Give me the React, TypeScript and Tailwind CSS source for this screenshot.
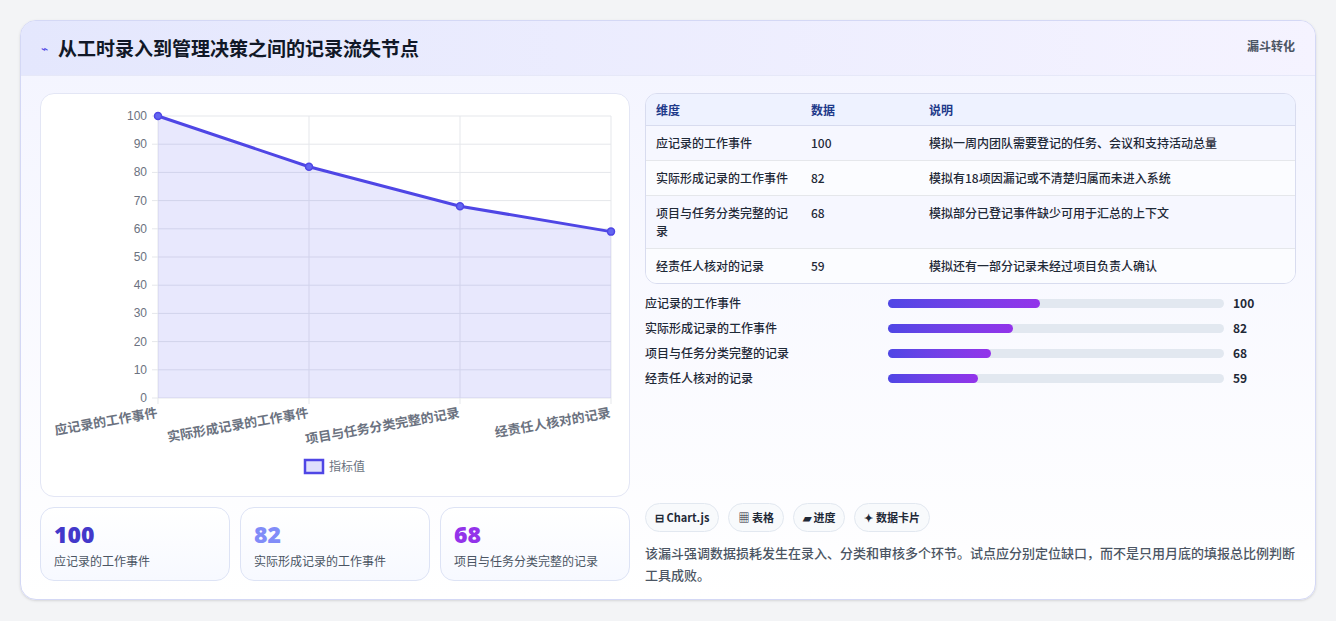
import React from "react";

const rows = [
  { k: "应记录的工作事件", v: 100, d: "模拟一周内团队需要登记的任务、会议和支持活动总量" },
  { k: "实际形成记录的工作事件", v: 82, d: "模拟有18项因漏记或不清楚归属而未进入系统" },
  { k: "项目与任务分类完整的记录", v: 68, d: "模拟部分已登记事件缺少可用于汇总的上下文" },
  { k: "经责任人核对的记录", v: 59, d: "模拟还有一部分记录未经过项目负责人确认" },
];

function Chart() {
  const x0 = 117, x1 = 570, y0 = 304, y1 = 22;
  const xs = [0, 1, 2, 3].map((i) => x0 + ((x1 - x0) / 3) * i);
  const ys = rows.map((r) => y0 - ((y0 - y1) * r.v) / 100);
  const line = xs.map((x, i) => `${i ? "L" : "M"}${x},${ys[i]}`).join(" ");
  const area = `${line} L${x1},${y0} L${x0},${y0} Z`;
  const ticks = [0, 10, 20, 30, 40, 50, 60, 70, 80, 90, 100];
  return (
    <svg width="588" height="400" className="block" style={{ fontFamily: "'Liberation Sans','Noto Sans CJK SC',sans-serif" }}>
      {ticks.map((t) => {
        const y = y0 - ((y0 - y1) * t) / 100;
        return (
          <g key={t}>
            <line x1={x0 - 6} x2={x1} y1={y} y2={y} stroke="#e5e7eb" />
            <text x={x0 - 11} y={y + 4} fontSize="12" fill="#6b7280" textAnchor="end">{t}</text>
          </g>
        );
      })}
      {xs.map((x, i) => (
        <line key={i} x1={x} x2={x} y1={y1} y2={y0 + 6} stroke="#e5e7eb" />
      ))}
      <path d={area} fill="rgba(99,102,241,0.15)" />
      <path d={line} fill="none" stroke="#4f46e5" strokeWidth="3" />
      {xs.map((x, i) => (
        <circle key={i} cx={x} cy={ys[i]} r="3.5" fill="#6366f1" stroke="#4f46e5" strokeWidth="1.5" />
      ))}
      {rows.map((r, i) => (
        <text key={i} x={xs[i]} y={y0 + 19} fontSize="13" fontWeight="bold" fill="#6b7280" textAnchor="end" transform={`rotate(-10 ${xs[i]} ${y0 + 19})`} style={{ fontFamily: "'Noto Sans CJK SC',sans-serif" }}>
          {r.k}
        </text>
      ))}
      <rect x="264" y="366" width="18" height="13" fill="rgba(99,102,241,0.2)" stroke="#4f46e5" strokeWidth="2.5" />
      <text x="288" y="377" fontSize="12" fill="#6b7280" style={{ fontFamily: "'Noto Sans CJK SC',sans-serif" }}>指标值</text>
    </svg>
  );
}

export default function App() {
  return (
    <div className="w-[1336px] h-[621px] bg-[#f3f4f6] pt-[20px] px-[20px]" style={{ fontFamily: "'Noto Sans CJK SC','Noto Sans',sans-serif" }}>
      <div className="w-[1296px] h-[580px] rounded-[16px] border border-[#d4d8f5] bg-gradient-to-b from-[#f3f4ff] to-white overflow-hidden shadow-sm">
        <div className="h-[55px] flex items-center justify-between px-[20px] bg-gradient-to-r from-[#e4e7fd] to-[#f5f3ff] border-b border-[#e6e8f8]">
          <div className="flex items-center gap-[10px]">
            <span className="text-[#4f46e5] text-[12px]">⌁</span>
            <h1 className="text-[19px] font-bold text-[#111827]">从工时录入到管理决策之间的记录流失节点</h1>
          </div>
          <span className="text-[12px] font-bold text-[#4b5563] self-start mt-[16px]">漏斗转化</span>
        </div>
        <div className="flex gap-[15px] px-[19px] pt-[17px]">
          <div className="w-[590px] flex flex-col gap-[10px]">
            <div className="h-[404px] rounded-[14px] border border-[#e3e6f5] bg-white">
              <Chart />
            </div>
            <div className="grid grid-cols-3 gap-[10px]">
              {[
                ["100", "text-[#4338ca]", rows[0].k],
                ["82", "text-[#818cf8]", rows[1].k],
                ["68", "text-[#9333ea]", rows[2].k],
              ].map(([n, c, l]) => (
                <div key={n} className="h-[74px] rounded-[14px] border border-[#dde3f5] bg-gradient-to-b from-white to-[#f7f9ff] px-[13px] pt-[12px]">
                  <div className={`text-[23px] leading-[28px] font-extrabold ${c}`} style={{ fontFamily: "'Open Sans',sans-serif" }}>{n}</div>
                  <div className="text-[12px] text-[#4b5563] mt-[4px]">{l}</div>
                </div>
              ))}
            </div>
          </div>
          <div className="w-[652px] flex flex-col">
            <div className="rounded-[12px] border border-[#d8dcef] overflow-hidden text-[12px] text-[#1f2937]">
              <div className="grid grid-cols-[155px_118px_1fr] h-[32px] items-center bg-[#eef2ff] border-b border-[#d8dcef] px-[10px] font-bold text-[#1e3a8a]">
                <span>维度</span><span>数据</span><span>说明</span>
              </div>
              {rows.map((r, i) => (
                <div key={i} className={`grid grid-cols-[155px_118px_1fr] px-[10px] py-[8px] leading-[18px] font-medium ${i ? "border-t border-[#e5e7eb]" : ""} ${i % 2 === 0 ? "bg-[#f6f7ff]" : "bg-[#fbfcff]"}`}>
                  <span className="pr-[14px]">{r.k}</span>
                  <span>{r.v}</span>
                  <span>{r.d}</span>
                </div>
              ))}
            </div>
            <div className="flex flex-col gap-[7px] mt-[10px]">
              {rows.map((r, i) => (
                <div key={i} className="flex items-center h-[18px] text-[12px] text-[#1f2937] font-medium">
                  <span className="w-[243px]">{r.k}</span>
                  <div className="w-[336px] h-[9px] rounded-full bg-[#e2e8f0]">
                    <div className="h-full rounded-full bg-gradient-to-r from-[#4f46e5] to-[#9333ea]" style={{ width: `${r.v * 0.452}%` }} />
                  </div>
                  <span className="ml-[9px] font-bold">{r.v}</span>
                </div>
              ))}
            </div>
            <div className="flex gap-[9px] mt-[116px] text-[11px] font-bold text-[#1f2937]">
              {["⊟ Chart.js", "▦ 表格", "▰ 进度", "✦ 数据卡片"].map((t) => (
                <span key={t} className="h-[29px] px-[9px] flex items-center rounded-full border border-[#e2e8f0] bg-[#f8fafc]">{t}</span>
              ))}
            </div>
            <p className="mt-[10px] text-[13px] leading-[22px] text-[#4b5563] font-medium">
              该漏斗强调数据损耗发生在录入、分类和审核多个环节。试点应分别定位缺口，而不是只用月底的填报总比例判断工具成败。
            </p>
          </div>
        </div>
      </div>
    </div>
  );
}
